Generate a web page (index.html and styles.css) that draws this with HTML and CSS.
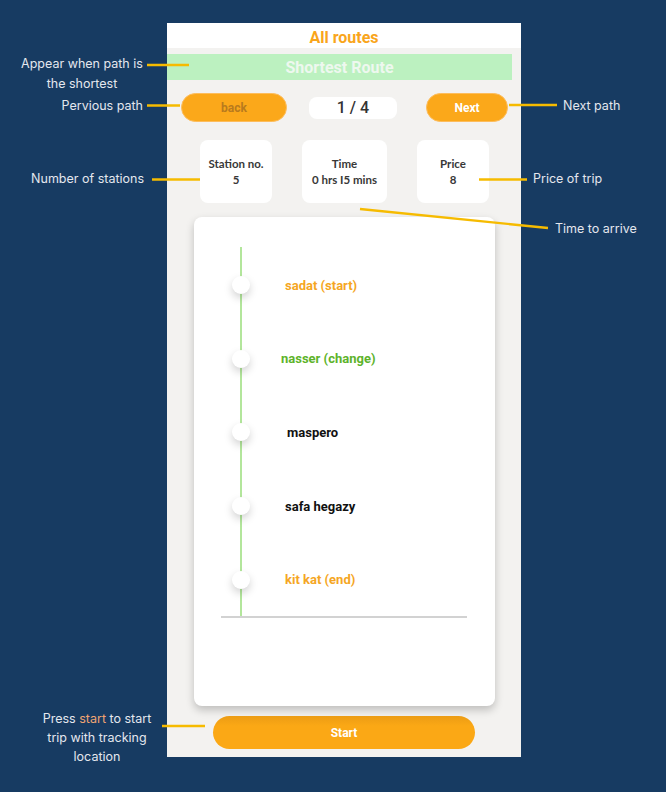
FILE: index.html
```html
<!DOCTYPE html>
<html lang="en">
<head>
<meta charset="utf-8">
<title>All routes</title>
<link rel="stylesheet" href="styles.css">
</head>
<body>
<main class="phone">
  <header class="app-header">All routes</header>
  <div class="banner">Shortest Route</div>
  <div class="nav-row">
    <button class="pill pill-back">back</button>
    <div class="pager">1 / 4</div>
    <button class="pill pill-next">Next</button>
  </div>
  <div class="stats">
    <div class="stat stat-narrow"><span>Station no.</span><span>5</span></div>
    <div class="stat stat-wide"><span>Time</span><span>0 hrs I5 mins</span></div>
    <div class="stat stat-narrow"><span>Price</span><span>8</span></div>
  </div>
  <section class="route-card">
    <ol class="timeline">
      <li class="stop"><span class="dot"></span><span class="label label-orange">sadat (start)</span></li>
      <li class="stop"><span class="dot"></span><span class="label label-green shift-left">nasser (change)</span></li>
      <li class="stop"><span class="dot"></span><span class="label label-dark shift-right">maspero</span></li>
      <li class="stop"><span class="dot"></span><span class="label label-dark">safa hegazy</span></li>
      <li class="stop"><span class="dot"></span><span class="label label-orange">kit kat (end)</span></li>
    </ol>
  </section>
  <button class="start-btn">Start</button>
</main>

<div class="callouts">
  <svg class="callout-lines" width="666" height="792" viewBox="0 0 666 792">
    <g stroke="#f6bb00" stroke-width="2.4" fill="none">
      <line x1="147" y1="65" x2="189" y2="65"/>
      <line x1="147" y1="105.5" x2="180" y2="105.5"/>
      <line x1="152" y1="179.5" x2="200" y2="179.5"/>
      <line x1="509" y1="105" x2="557" y2="105"/>
      <line x1="479" y1="179.5" x2="527" y2="179.5"/>
      <line x1="360" y1="209" x2="548" y2="228"/>
      <line x1="162" y1="726" x2="205" y2="726"/>
    </g>
  </svg>
  <p class="note note-appear">Appear when path is<br>the shortest</p>
  <p class="note note-prev">Pervious path</p>
  <p class="note note-stations">Number of stations</p>
  <p class="note note-next">Next path</p>
  <p class="note note-price">Price of trip</p>
  <p class="note note-time">Time to arrive</p>
  <p class="note note-start">Press <span class="hl">start</span> to start<br>trip with tracking<br>location</p>
</div>
</body>
</html>
```
FILE: styles.css
```css
* { box-sizing: border-box; }

body {
  margin: 0;
  width: 666px;
  height: 792px;
  overflow: hidden;
  background: #173b62;
  font-family: Roboto, "Liberation Sans", sans-serif;
  position: relative;
}

.phone {
  margin: 23px 0 0 167px;
  width: 354px;
  height: 734px;
  background: #f3f2f0;
  display: flex;
  flex-direction: column;
}

.app-header {
  height: 25px;
  background: #ffffff;
  color: #f9a51b;
  font-weight: 700;
  font-size: 16px;
  display: flex;
  align-items: center;
  justify-content: center;
  padding-top: 4px;
}

.banner {
  margin: 6px 9px 0 0;
  height: 26px;
  background: #bcf1c0;
  color: #eef8ef;
  font-weight: 700;
  font-size: 16px;
  display: flex;
  align-items: center;
  justify-content: center;
  padding-top: 1px;
}

.nav-row {
  margin-top: 13px;
  padding-left: 14px;
  height: 29px;
  display: flex;
  align-items: center;
}

.pill {
  height: 29px;
  border-radius: 15px;
  border: 1px solid #fdbd5c;
  background: #fba81a;
  font-family: Roboto, "Liberation Sans", sans-serif;
  font-weight: 700;
  font-size: 12px;
  padding: 0;
  display: flex;
  align-items: center;
  justify-content: center;
}

.pill-back {
  width: 106px;
  color: #b87a1e;
}

.pill-next {
  width: 82px;
  color: #ffffff;
}

.pager {
  width: 88px;
  height: 22px;
  margin: 0 29px 0 22px;
  background: #ffffff;
  border-radius: 8px;
  color: #333333;
  font-size: 16px;
  font-weight: 500;
  display: flex;
  align-items: center;
  justify-content: center;
}

.stats {
  margin-top: 18px;
  padding-left: 33px;
  display: flex;
  gap: 30px;
}

.stat {
  height: 63px;
  background: #ffffff;
  border-radius: 8px;
  display: flex;
  flex-direction: column;
  align-items: center;
  justify-content: center;
  font-family: Lato, "Open Sans", sans-serif;
  font-weight: 700;
  font-size: 11.5px;
  line-height: 16px;
  color: #383838;
  padding-top: 1px;
}

.stat-narrow { width: 72px; }
.stat-wide { width: 85px; }

.route-card {
  margin: 14px 0 0 27px;
  width: 301px;
  height: 489px;
  background: #ffffff;
  border-radius: 8px;
  box-shadow: 0 4px 9px rgba(0, 0, 0, 0.22);
  padding-top: 30px;
}

.timeline {
  list-style: none;
  margin: 0 28px 0 27px;
  padding: 1px 0 0;
  border-bottom: 2px solid #d2d2d2;
  background: linear-gradient(to right, transparent 19px, #b3e69c 19px, #b3e69c 21px, transparent 21px);
}

.stop {
  height: 73.6px;
  display: flex;
  align-items: center;
  padding-top: 1px;
}

.dot {
  width: 18px;
  height: 18px;
  margin-left: 11px;
  border-radius: 50%;
  background: #ffffff;
  box-shadow: 0 4px 9px rgba(0, 0, 0, 0.18);
  flex: none;
}

.label {
  margin-left: 35px;
  font-weight: 700;
  font-size: 13px;
}

.shift-left { margin-left: 31px; }
.shift-right { margin-left: 37px; }

.label-orange { color: #f5a623; }
.label-green { color: #5db32a; }
.label-dark { color: #111111; }

.start-btn {
  margin: 10px 0 0 46px;
  width: 262px;
  height: 33px;
  border: none;
  border-radius: 17px;
  background: linear-gradient(#ec9c14, #fba815 30%);
  color: #ffffff;
  font-family: Roboto, "Liberation Sans", sans-serif;
  font-weight: 700;
  font-size: 12px;
  padding: 0;
}

/* annotation overlay */
.callouts {
  position: absolute;
  inset: 0;
  pointer-events: none;
}

.callout-lines {
  position: absolute;
  left: 0;
  top: 0;
}

.note {
  position: absolute;
  margin: 0;
  color: #e4e7ee;
  font-family: Inter, "Open Sans", sans-serif;
  font-size: 12.5px;
  line-height: 20px;
  white-space: nowrap;
}

.note-appear { left: 2px; width: 160px; top: 54px; text-align: center; }
.note-prev { right: 523px; top: 96px; }
.note-stations { right: 522px; top: 169px; }
.note-next { left: 563px; top: 96px; }
.note-price { left: 533px; top: 169px; }
.note-time { left: 555px; top: 219px; }
.note-start { left: 17px; width: 160px; top: 709px; line-height: 19px; text-align: center; }

.hl { color: #f0a472; }
```
